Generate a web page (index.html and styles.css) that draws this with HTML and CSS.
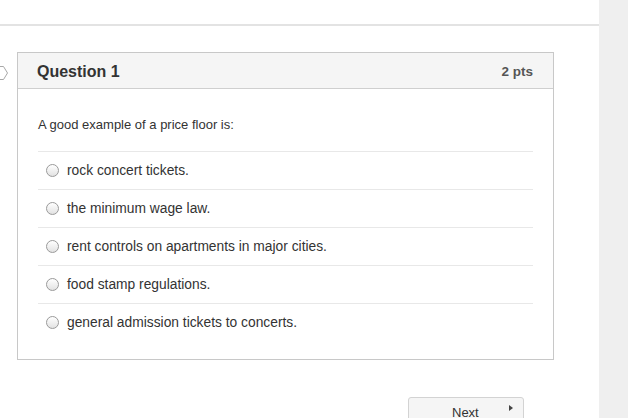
FILE: index.html
```html
<!DOCTYPE html>
<html>
<head>
<meta charset="utf-8">
<link rel="stylesheet" href="styles.css">
</head>
<body>
<div class="page">
  <main class="content">
    <div class="topbar"></div>
    <section class="card">
      <svg class="flag" width="10" height="16" viewBox="0 0 10 16"><polygon points="-4,1.5 3.5,1.5 7.5,8 3.5,14.5 -4,14.5" fill="#fff" stroke="#a8a8a8" stroke-width="1"/></svg>
      <header class="card-head">
        <span class="q-title">Question 1</span>
        <span class="q-pts">2 pts</span>
      </header>
      <div class="card-body">
        <p class="q-text">A good example of a price floor is:</p>
        <div class="answers">
          <label class="answer"><span class="radio"></span><span class="a-text">rock concert tickets.</span></label>
          <label class="answer"><span class="radio"></span><span class="a-text">the minimum wage law.</span></label>
          <label class="answer"><span class="radio"></span><span class="a-text">rent controls on apartments in major cities.</span></label>
          <label class="answer"><span class="radio"></span><span class="a-text">food stamp regulations.</span></label>
          <label class="answer"><span class="radio"></span><span class="a-text">general admission tickets to concerts.</span></label>
        </div>
      </div>
    </section>
    <div class="nav">
      <button class="next-btn"><span>Next</span><span class="tri"></span></button>
    </div>
  </main>
  <aside class="sidebar"></aside>
</div>
</body>
</html>
```
FILE: styles.css
```css
html, body {
  margin: 0;
  padding: 0;
  background: #fff;
  font-family: "Liberation Sans", Arial, sans-serif;
  color: #333;
  overflow: hidden;
}
.page {
  display: flex;
  width: 628px;
  height: 418px;
}
.content {
  width: 599px;
  flex: none;
}
.sidebar {
  flex: 1;
  background: #efefef;
}
.topbar {
  height: 24px;
  border-bottom: 2px solid #e3e3e3;
}
.card {
  position: relative;
  margin: 26px 0 0 17px;
  width: 535px;
  border: 1px solid #c8c8c8;
  background: #fff;
}
.flag {
  position: absolute;
  left: -18px;
  top: 12px;
}
.card-head {
  display: flex;
  justify-content: space-between;
  align-items: center;
  height: 33px;
  padding: 2px 20px 0 19px;
  background: #f5f5f5;
  border-bottom: 1px solid #cfcfcf;
}
.q-title {
  font-size: 16px;
  font-weight: bold;
  color: #333;
}
.q-pts {
  font-size: 13.5px;
  font-weight: bold;
  color: #555;
}
.card-body {
  padding: 28px 20px 18px 20px;
}
.q-text {
  margin: 0 0 18px 0;
  font-size: 13px;
  line-height: 16px;
  color: #333;
}
.answer {
  display: flex;
  align-items: center;
  height: 37px;
  border-top: 1px solid #e8e8e8;
  padding-left: 8px;
  font-size: 13.8px;
  color: #333;
}
.radio {
  width: 11px;
  height: 11px;
  border-radius: 50%;
  border: 1px solid #9a9a9a;
  background: linear-gradient(#ffffff, #e2e2e2);
  margin-right: 8px;
  flex: none;
}
.nav {
  display: flex;
  justify-content: flex-end;
  padding-right: 75px;
  margin-top: 37px;
}
.next-btn {
  width: 116px;
  height: 30px;
  border: 1px solid #d3d3d3;
  border-radius: 3px;
  background: #f5f5f5;
  font-family: "Liberation Sans", Arial, sans-serif;
  font-size: 13px;
  color: #333;
  display: flex;
  align-items: flex-start;
  padding: 7px 0 0 43px;
  position: relative;
}
.tri {
  position: absolute;
  left: 100px;
  top: 7px;
  width: 0;
  height: 0;
  border-top: 3px solid transparent;
  border-bottom: 3px solid transparent;
  border-left: 4px solid #444;
}
```
